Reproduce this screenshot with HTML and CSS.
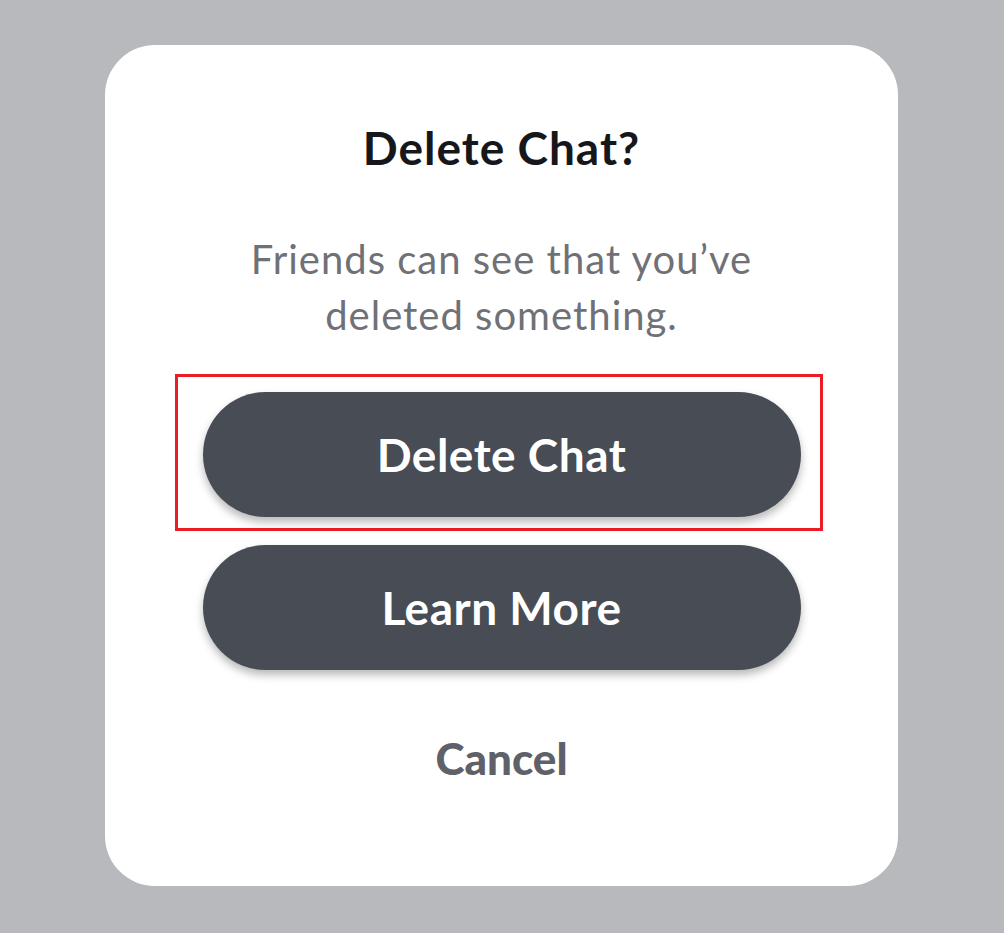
FILE: index.html
```html
<!DOCTYPE html>
<html lang="en">
<head>
    <meta charset="UTF-8">
    <title>Delete Chat</title>
    <link rel="stylesheet" href="styles.css">
</head>
<body>
    <div class="dialog">
        <h1 class="dialog-title">Delete Chat?</h1>
        <p class="dialog-text">Friends can see that you’ve<br>deleted something.</p>
        <div class="highlight-box">
            <button type="button" class="pill-button">Delete Chat</button>
        </div>
        <button type="button" class="pill-button second">Learn More</button>
        <button type="button" class="cancel-button">Cancel</button>
    </div>
</body>
</html>
```

FILE: styles.css
```css
body {
    font-family: 'Lato', 'Open Sans', sans-serif;
    background-color: #b8b9bd;
    margin: 0;
    padding: 45px 0 0 105px;
}
.dialog {
    width: 793px;
    height: 841px;
    box-sizing: border-box;
    padding-top: 73px;
    background-color: #ffffff;
    border-radius: 50px;
    display: flex;
    flex-direction: column;
    align-items: center;
}
.dialog-title {
    margin: 0;
    font-size: 46px;
    line-height: 60px;
    font-weight: 700;
    letter-spacing: 1px;
    color: #16171a;
}
.dialog-text {
    margin: 53px 0 0;
    font-size: 40px;
    line-height: 56px;
    letter-spacing: 1px;
    text-align: center;
    color: #6f7177;
}
/* red outline around the first button, sits a little left of center */
.highlight-box {
    margin: 31px 6px 0 0;
    padding: 15px 19px 11px 25px;
    border: 3px solid #ec1c24;
}
.pill-button {
    display: block;
    width: 598px;
    height: 125px;
    border: none;
    border-radius: 63px;
    background-color: #474c55;
    color: #ffffff;
    font-family: inherit;
    font-size: 46px;
    font-weight: 700;
    letter-spacing: 0.5px;
    box-shadow: 0 5px 9px rgba(0, 0, 0, 0.28);
}
.pill-button.second {
    margin-top: 14px;
}
.cancel-button {
    margin-top: 58px;
    padding: 0;
    border: none;
    background: none;
    font-family: inherit;
    font-size: 44px;
    line-height: 60px;
    font-weight: 900;
    color: #5f6168;
}
```
